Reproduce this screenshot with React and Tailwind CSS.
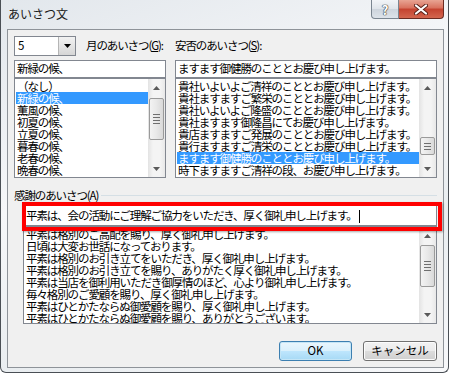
import React from 'react';

const FONT = "font-['Noto_Sans_CJK_JP','Noto_Sans',sans-serif]";

const monthItems = ['（なし）', '新緑の候、', '薫風の候、', '初夏の候、', '立夏の候、', '暮春の候、', '老春の候、', '晩春の候、'];

const safetyItems = [
  '貴社いよいよご清祥のこととお慶び申し上げます。',
  '貴社ますますご繁栄のこととお慶び申し上げます。',
  '貴社いよいよご隆盛のこととお慶び申し上げます。',
  '貴社ますます御隆昌にてお慶び申し上げます。',
  '貴店ますますご発展のこととお慶び申し上げます。',
  '貴行ますますご清栄のこととお慶び申し上げます。',
  'ますます御健勝のこととお慶び申し上げます。',
  '時下ますますご清祥の段、お慶び申し上げます。',
];

const thanksItems = [
  '平素は格別のご高配を賜り、厚く御礼申し上げます。',
  '日頃は大変お世話になっております。',
  '平素は格別のお引き立てをいただき、厚く御礼申し上げます。',
  '平素は格別のお引き立てを賜り、ありがたく厚く御礼申し上げます。',
  '平素は当店を御利用いただき御厚情のほど、心より御礼申し上げます。',
  '毎々格別のご愛顧を賜り、厚く御礼申し上げます。',
  '平素はひとかたならぬ御愛顧を賜り、厚く御礼申し上げます。',
  '平素はひとかたならぬ御愛顧を賜り、ありがとうございます。',
];

function Arrow({ down }) {
  return (
    <svg width="7" height="4" viewBox="0 0 7 4">
      {down ? <path d="M0 0h7L3.5 4z" fill="#5a5a5a" /> : <path d="M0 4h7L3.5 0z" fill="#5a5a5a" />}
    </svg>
  );
}

// Windows 7 style vertical scrollbar
function ScrollBar({ thumbTop, thumbHeight }) {
  const grips = thumbHeight > 24 ? 4 : 3;
  return (
    <div className="w-[17px] h-full flex flex-col bg-[linear-gradient(90deg,#e3e3e3,#f4f4f4_30%,#f4f4f4_70%,#e8e8e8)]">
      <div className="h-[17px] flex items-center justify-center"><Arrow /></div>
      <div className="flex-1 flex flex-col items-center">
        <div
          className="w-[15px] rounded-[2px] border border-[#9a9a9a] bg-[linear-gradient(90deg,#f3f3f3,#e8e8e8_50%,#d9d9d9)] flex flex-col items-center justify-center gap-[2px]"
          style={{ marginTop: thumbTop, height: thumbHeight }}
        >
          {Array.from({ length: grips }).map((_, i) => (
            <div key={i} className="w-[7px] h-px bg-[#6f6f6f]" />
          ))}
        </div>
      </div>
      <div className="h-[17px] flex items-center justify-center"><Arrow down /></div>
    </div>
  );
}

function ListBox({ items, selected, thumbTop, thumbHeight, className }) {
  return (
    <div className={`border border-[#828790] bg-white flex ${className}`}>
      <div className="flex-1 overflow-hidden pl-px pt-px">
        {items.map((t, i) => (
          <div
            key={i}
            className={`h-[12px] leading-[12px] whitespace-nowrap pl-px ${
              i === selected ? 'bg-[#3399ff] text-white' : 'text-black'
            }`}
          >
            {t}
          </div>
        ))}
      </div>
      <ScrollBar thumbTop={thumbTop} thumbHeight={thumbHeight} />
    </div>
  );
}

function TextBox({ value, className }) {
  return (
    <div className={`border border-[#828790] bg-white flex items-center pl-[2px] whitespace-nowrap overflow-hidden ${className}`}>
      {value}
    </div>
  );
}

function Button({ children, primary }) {
  return (
    <div
      className={`h-[20px] rounded-[3px] border flex items-center justify-center text-black ${
        primary
          ? 'w-[73px] border-[#3c7fb1] bg-[linear-gradient(180deg,#eaf6fd,#d9f0fc_50%,#bee6fd_50%,#a7d9f5)] shadow-[inset_0_0_0_1px_#c4e5f6]'
          : 'w-[74px] border-[#707070] bg-[linear-gradient(180deg,#f2f2f2,#ebebeb_50%,#dddddd_50%,#cfcfcf)] shadow-[inset_0_0_0_1px_#fcfcfc]'
      }`}
    >
      {children}
    </div>
  );
}

export default function App() {
  return (
    <div className={`w-[452px] h-[376px] bg-white ${FONT}`}>
      <div className="w-[449px] h-[373px] border-x border-b border-[#4a4f55] rounded-b-[6px] bg-[linear-gradient(160deg,#e2e7ec,#f6f7f9_40%,#e9edf0_70%,#f7f8fa)] flex flex-col">
        {/* Title bar */}
        <div className="h-[29px] flex items-start">
          <div className="pl-[7px] pt-[7px] text-[12px] leading-[14px] text-[#1a1a1a]">あいさつ文</div>
          <div className="ml-auto mr-[4px] flex">
            <div className="w-[28px] h-[19px] rounded-bl-[4px] border border-t-0 border-[#7a8590] bg-[linear-gradient(180deg,#f2f4f7,#dfe4ea_50%,#cdd4dc_50%,#dde3ea)] flex items-center justify-center">
              <span className="text-[13px] leading-[13px] font-bold text-white [text-shadow:0_0_1px_#333,0_0_1px_#333,0_0_1px_#333]">?</span>
            </div>
            <div className="w-[45px] h-[19px] rounded-br-[4px] border border-l-0 border-t-0 border-[#6b2b22] bg-[linear-gradient(180deg,#e8a493,#d8705d_45%,#c4422f_50%,#d3664f)] flex items-center justify-center">
              <svg width="14" height="11" viewBox="0 0 14 11">
                <path d="M2 1.5l10 8M12 1.5l-10 8" stroke="#5a2018" strokeWidth="4" strokeLinecap="round" />
                <path d="M2 1.5l10 8M12 1.5l-10 8" stroke="#ffffff" strokeWidth="2.2" strokeLinecap="round" />
              </svg>
            </div>
          </div>
        </div>

        {/* Client area */}
        <div className="ml-[6px] w-[437px] h-[339px] border border-[#8e9399] bg-[#f0f0f0] pl-[6px] pt-[6px] text-[11.5px] tracking-[-1.1px] text-black">
          <div className="flex items-center h-[20px]">
            <div className="w-[62px] h-[20px] border border-[#828790] bg-white flex">
              <div className="flex-1 pl-[3px] flex items-center">5</div>
              <div className="w-[17px] border-l border-[#b5b5b5] bg-[linear-gradient(180deg,#f2f2f2,#e4e4e4_50%,#d6d6d6)] flex items-center justify-center">
                <svg width="7" height="4" viewBox="0 0 7 4"><path d="M0 0h7L3.5 4z" fill="#000" /></svg>
              </div>
            </div>
            <div className="ml-[10px] w-[89px] whitespace-nowrap">月のあいさつ(<span className="underline">G</span>):</div>
            <div className="whitespace-nowrap">安否のあいさつ(<span className="underline">S</span>):</div>
          </div>

          <div className="mt-[4px] flex gap-[9px]">
            <div className="w-[152px] flex flex-col">
              <TextBox value="新緑の候、" className="h-[18px]" />
              <ListBox items={monthItems} selected={1} thumbTop={2} thumbHeight={42} className="h-[100px]" />
            </div>
            <div className="w-[262px] flex flex-col">
              <TextBox value="ますます御健勝のこととお慶び申し上げます。" className="h-[18px]" />
              <ListBox items={safetyItems} selected={6} thumbTop={41} thumbHeight={18} className="h-[100px]" />
            </div>
          </div>

          <div className="mt-[10px] w-[423px] h-[14px] flex items-center">
            <span className="whitespace-nowrap leading-[14px]">感謝のあいさつ(A)</span>
            <div className="ml-[3px] flex-1 h-px bg-[#d5dfe5]" />
          </div>

          <div className="ml-[9px] mt-[3px] w-[414px] flex flex-col relative">
            <TextBox value={<span>平素は、会の活動にご理解ご協力をいただき、厚く御礼申し上げます。<span className="inline-block w-px h-[13px] bg-black align-middle ml-[2px]" /></span>} className="h-[21px]" />
            <ListBox items={thanksItems} selected={-1} thumbTop={1} thumbHeight={42} className="h-[98px]" />
            <div className="absolute left-[-1px] top-[-3px] w-[420px] h-[29px] border-[4px] border-[#ff0000] shadow-[1px_1px_2px_rgba(0,0,0,0.35)]" />
          </div>

          <div className="mt-[17px] w-[423px] flex justify-end gap-[11px] tracking-normal">
            <Button primary>OK</Button>
            <Button>キャンセル</Button>
          </div>
        </div>
      </div>
    </div>
  );
}
